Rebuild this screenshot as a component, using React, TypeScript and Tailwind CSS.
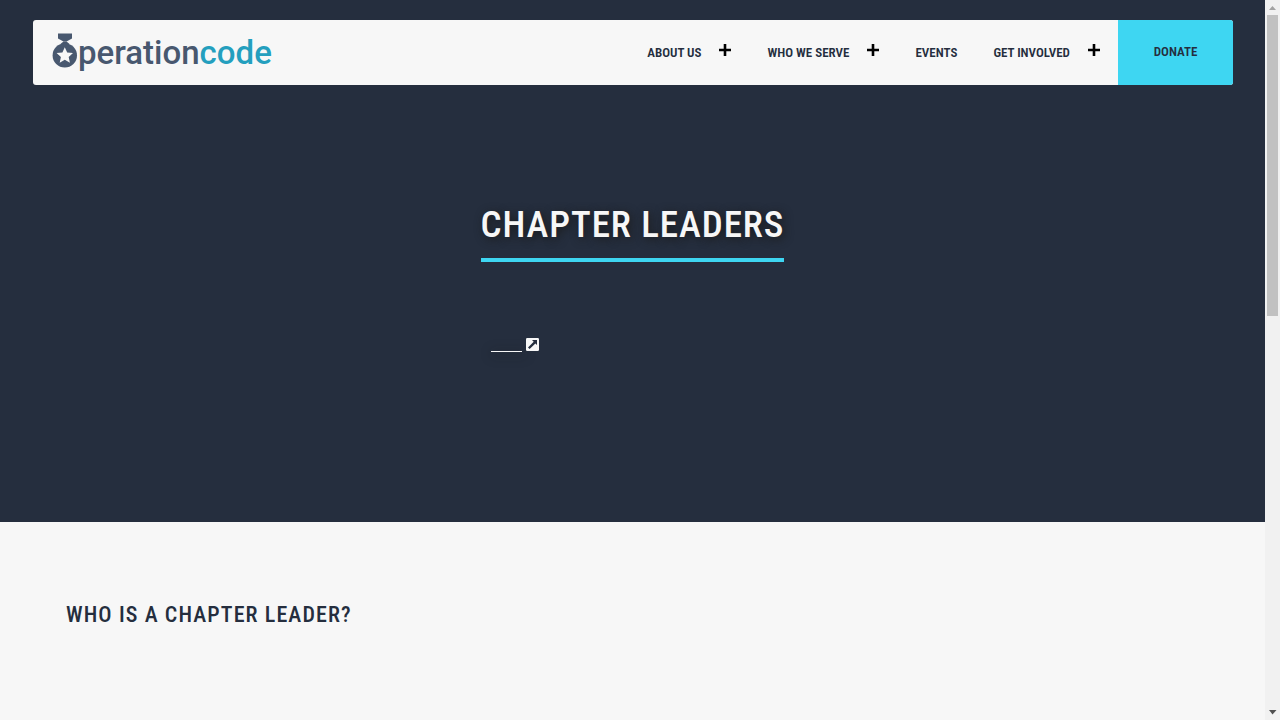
const LINK = 'font-semibold text-[13px] leading-5 text-[#252e3e] whitespace-nowrap'

type NavItem = { label: string; menu: boolean }

const items: NavItem[] = [
  { label: 'ABOUT US', menu: true },
  { label: 'WHO WE SERVE', menu: true },
  { label: 'EVENTS', menu: false },
  { label: 'GET INVOLVED', menu: true },
]

function Plus() {
  return (
    <svg className="block size-3" viewBox="0 0 12 12" aria-hidden="true">
      <path d="M4.7 0h2.6v4.7H12v2.6H7.3V12H4.7V7.3H0V4.7h4.7z" fill="#000" />
    </svg>
  )
}

function Logo() {
  return (
    <svg className="block h-[42px] w-[222px]" viewBox="0 0 222 42" role="img" aria-label="Operation Code">
      <g fill="#48586f">
        <path d="M6 1.500h14v5l-5.500 3h-3L6 6.500z" />
        <path d="M11.500 9.500h3l3 2.500h-9z" />
        <circle cx="12.8" cy="23.4" r="12.2" />
      </g>
      <path
        d="M12.8 15.200l2.400 5.300 5.800.6-4.300 3.900 1.200 5.700-5.100-2.900-5.100 2.900 1.200-5.700-4.300-3.900 5.800-.6z"
        fill="#f7f7f7"
      />
      <text x="26" y="32" fontSize="33" className="font-['Roboto',sans-serif] font-medium" fill="#48586f">
        peration<tspan fill="#249fbe">code</tspan>
      </text>
    </svg>
  )
}

function Scrollbar() {
  return (
    <div className="sticky top-0 flex h-screen w-[15px] shrink-0 flex-col items-center bg-[#f1f1f1]" aria-hidden="true">
      <svg className="block h-[15px] w-[15px] shrink-0" viewBox="0 0 15 15">
        <path d="M4 10l3.500-4 3.500 4z" fill="#a3a3a3" />
      </svg>
      <div className="h-[301px] w-[11px] bg-[#c1c1c1]" />
      <svg className="mt-auto block h-[15px] w-[15px] shrink-0" viewBox="0 0 15 15">
        <path d="M4 5h7.500L7.500 9.500z" fill="#505050" />
      </svg>
    </div>
  )
}

export default function App() {
  return (
    <div className="flex min-h-screen bg-[#f7f7f7] font-['Roboto_Condensed','Liberation_Sans_Narrow',sans-serif]">
      <div className="min-w-0 flex-1">
        <div className="bg-[#252e3e] pt-5 pb-[170px]">
          <header className="mr-8 ml-[33px] flex h-[65px] items-stretch justify-between overflow-hidden rounded-[3px] bg-[#f7f7f7] pl-[19px]">
            <a href="#home" className="pt-3">
              <Logo />
            </a>
            <nav className="flex items-stretch" aria-label="Main">
              <ul className="flex items-center">
                {items.map((item) => (
                  <li key={item.label} className="flex items-center px-[18px]">
                    <a href="#nav" className={LINK}>
                      {item.label}
                    </a>
                    {item.menu && (
                      <button type="button" className="ml-[18px] pb-1.5" aria-label={`Open ${item.label} menu`}>
                        <Plus />
                      </button>
                    )}
                  </li>
                ))}
              </ul>
              <a href="#donate" className="flex w-[115px] items-center justify-center bg-[#3ed6f2] pb-0.5">
                <span className={LINK}>DONATE</span>
              </a>
            </nav>
          </header>
          <div className="flex flex-col items-center pt-[111px]">
            <div>
              <h1 className="border-b-4 border-[#3ed6f2] pb-1 text-center text-[37px] leading-[58px] font-medium tracking-wide text-[#f7f7f7] [text-shadow:2px_2px_10px_#1a1a1a]">
                CHAPTER LEADERS
              </h1>
              <a href="#join" aria-label="Open in a new tab" className="mt-[76px] ml-[10px] flex w-12 items-start justify-between">
                <span className="mt-[13px] h-px w-[31px] bg-[#f7f7f7] shadow-[2px_2px_12px_2px_#1a1a1a44]" />
                <svg className="block size-[13px]" viewBox="0 0 13 13" aria-hidden="true">
                  <rect width="13" height="13" rx="1.200" fill="#f7f7f7" />
                  <path d="M6 2h5v5L9.400 5.400 3.600 11 2 9.400l5.700-5.700z" fill="#252e3e" />
                </svg>
              </a>
            </div>
          </div>
        </div>
        <main className="px-[66px] pt-[75px]">
          <h2 className="text-[22px] leading-9 font-medium tracking-wider text-[#252e3e]">WHO IS A CHAPTER LEADER?</h2>
        </main>
      </div>
      <Scrollbar />
    </div>
  )
}
